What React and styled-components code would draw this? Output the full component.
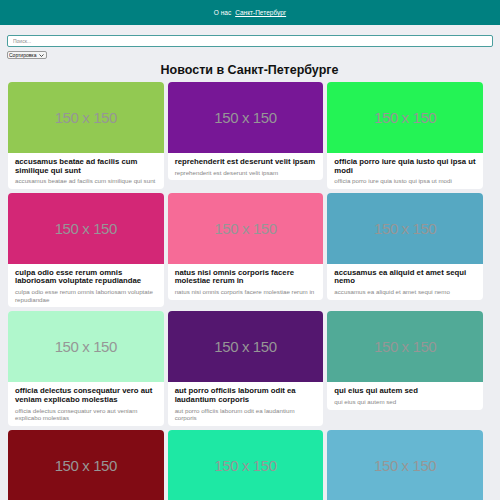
import React from "react";
import styled, { createGlobalStyle } from "styled-components";

const GlobalStyle = createGlobalStyle`
  body {
    margin: 0;
    background: #edeef2;
    font-family: "Liberation Sans", Arial, sans-serif;
  }
`;

const Header = styled.header`
  height: 25px;
  background: #008080;
  display: flex;
  justify-content: center;
  align-items: center;
  gap: 4px;
  font-size: 6.5px;
  color: #fff;
`;

const HeaderLink = styled.a`
  color: #fff;
  text-decoration: underline;
`;

const Main = styled.main`
  padding: 10px 8px 0 7px;
`;

const Search = styled.input`
  display: block;
  box-sizing: border-box;
  width: 486px;
  height: 12px;
  padding: 0 5px;
  border: 1px solid #4a9e9e;
  border-radius: 2px;
  background: #fff;
  font-family: inherit;
  font-size: 5px;
  outline: none;

  &::placeholder {
    color: #8a8a8a;
  }
`;

const SelectWrap = styled.div`
  position: relative;
  display: flex;
  width: fit-content;
  margin-top: 4px;
`;

const Select = styled.select`
  appearance: none;
  box-sizing: border-box;
  width: 40px;
  height: 8px;
  padding: 0 0 0 1px;
  border: 1px solid #9a9a9a;
  border-radius: 2px;
  background: #f4f4f4;
  font-family: inherit;
  font-size: 5px;
  line-height: 6px;
  color: #111;
`;

const Chevron = styled.svg`
  position: absolute;
  right: 3px;
  top: 2.5px;
  pointer-events: none;
`;

const Title = styled.h1`
  margin: 3px 0 4px;
  text-align: center;
  font-size: 12.5px;
  line-height: 16px;
  font-weight: 700;
  color: #111;
`;

const Grid = styled.div`
  display: grid;
  grid-template-columns: repeat(3, 1fr);
  gap: 4px;
  align-items: start;
  margin: 0 9px 0 1px;
`;

const Card = styled.div`
  background: #fff;
  border-radius: 4px;
  overflow: hidden;
`;

const Thumb = styled.div`
  height: 71px;
  background: ${(p) => p.$color};
  display: flex;
  align-items: center;
  justify-content: center;
  color: #969696;
  font-size: 15px;
  letter-spacing: -0.4px;
`;

const Body = styled.div`
  padding: 5px 7px 4px;
`;

const CardTitle = styled.div`
  font-size: 7.75px;
  line-height: 8.6px;
  font-weight: 700;
  color: #111;
`;

const CardDesc = styled.div`
  margin-top: 2px;
  font-size: 6.2px;
  line-height: 7.7px;
  color: #888;
`;

const photos = [
  ["accusamus beatae ad facilis cum similique qui sunt", "#92c952"],
  ["reprehenderit est deserunt velit ipsam", "#771796"],
  ["officia porro iure quia iusto qui ipsa ut modi", "#24f355"],
  ["culpa odio esse rerum omnis laboriosam voluptate repudiandae", "#d32776"],
  ["natus nisi omnis corporis facere molestiae rerum in", "#f66b97"],
  ["accusamus ea aliquid et amet sequi nemo", "#56a8c2"],
  ["officia delectus consequatur vero aut veniam explicabo molestias", "#b0f7cc"],
  ["aut porro officiis laborum odit ea laudantium corporis", "#54176f"],
  ["qui eius qui autem sed", "#51aa97"],
  ["beatae et provident et ut vel", "#810b14"],
  ["nihil at amet non hic quia qui", "#1ee8a4"],
  ["mollitia soluta ut rerum eos aliquam consequatur perspiciatis maiores", "#66b7d2"],
];

export default function App() {
  return (
    <>
      <GlobalStyle />
      <Header>
        <span>О нас</span>
        <HeaderLink href="#">Санкт-Петербург</HeaderLink>
      </Header>
      <Main>
        <Search placeholder="Поиск..." />
        <SelectWrap>
          <Select defaultValue="">
            <option value="">Сортировка</option>
            <option value="title">По названию</option>
          </Select>
          <Chevron width="5" height="3" viewBox="0 0 10 6">
            <path d="M1 1l4 4 4-4" fill="none" stroke="#222" strokeWidth="1.6" />
          </Chevron>
        </SelectWrap>
        <Title>Новости в Санкт-Петербурге</Title>
        <Grid>
          {photos.map(([title, color]) => (
            <Card key={title}>
              <Thumb $color={color}>150 x 150</Thumb>
              <Body>
                <CardTitle>{title}</CardTitle>
                <CardDesc>{title}</CardDesc>
              </Body>
            </Card>
          ))}
        </Grid>
      </Main>
    </>
  );
}
